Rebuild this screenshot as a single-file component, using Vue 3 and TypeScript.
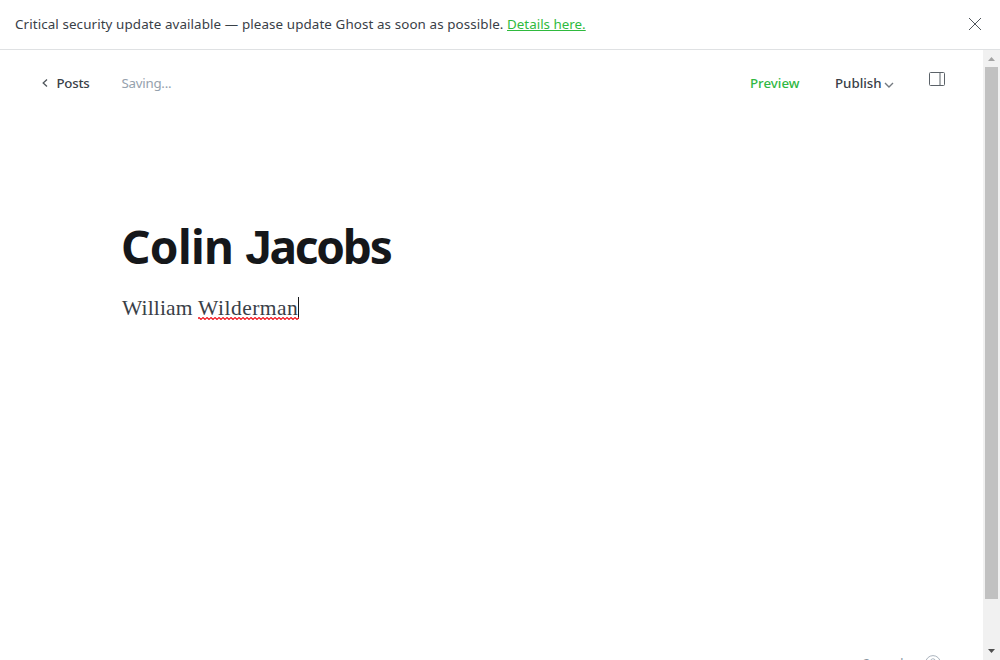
<script setup lang="ts">
const titleWords = ['Colin', 'Jacobs']
const saveStatus = 'Saving...'
const wordCount = 2
</script>

<template>
  <div class="app">
    <header class="alert">
      <p class="alert-text"><span class="alert-message">Critical security update available — please update Ghost as soon as possible.</span><a class="alert-link">Details here.</a></p>
      <svg class="close" width="14" height="14" viewBox="0 0 14 14"><path d="M1 1l12 12M13 1L1 13" /></svg>
    </header>
    <div class="body">
      <main class="editor">
        <nav class="toolbar">
          <a class="back">
            <svg width="6" height="8" viewBox="0 0 6 8"><path d="M5 .5L1.2 4L5 7.5" /></svg>
            <span>Posts</span>
          </a>
          <span class="status">{{ saveStatus }}</span>
          <a class="preview">Preview</a>
          <a class="publish">
            <span>Publish</span>
            <svg width="10" height="6" viewBox="0 0 10 6"><path d="M1 1l4 4l4-4" /></svg>
          </a>
          <svg class="panel" width="16" height="14" viewBox="0 0 16 14">
            <rect x=".5" y=".5" width="15" height="13" rx="1" />
            <path d="M11 1v12" />
          </svg>
        </nav>
        <h1 class="title"><span v-for="word in titleWords" :key="word" class="title-word">{{ word }}</span></h1>
        <p class="content"><span class="first">William</span><span class="misspelled">Wilderman<svg class="squiggle" width="101" height="3" viewBox="0 0 101 3"><defs><pattern id="wave" width="4" height="3" patternUnits="userSpaceOnUse"><path d="M-1 2.5L1 .5L3 2.5L5 .5" /></pattern></defs><rect width="101" height="3" fill="url(#wave)" /></svg></span><span class="caret"></span></p>
        <footer class="footer">
          <span class="words">{{ wordCount }} words</span>
          <svg width="16" height="16" viewBox="0 0 16 16"><circle cx="8" cy="8" r="7.4" /><path d="M5.6 6.2a2.4 2.4 0 1 1 3.5 2.1Q8 8.8 8 10M8 11.5v1" /></svg>
        </footer>
      </main>
      <div class="scrollbar">
        <svg class="arrow up" width="7" height="4" viewBox="0 0 7 4"><path d="M0 4L3.5 0L7 4z" /></svg>
        <div class="thumb"></div>
        <svg class="arrow down" width="7" height="4" viewBox="0 0 7 4"><path d="M0 0L3.5 4L7 0z" /></svg>
      </div>
    </div>
  </div>
</template>

<style>
body { margin: 0; overflow: hidden; background: #fff; }
</style>

<style scoped>
.app { height: 660px; display: flex; flex-direction: column; overflow: hidden; font-family: "Noto Sans", "Open Sans", sans-serif; color: #394047; background: #fff; }
.app p, .app h1 { margin: 0; }
svg { fill: none; flex: none; display: block; }
.alert { box-sizing: border-box; height: 50px; flex: none; border-bottom: 1px solid #dfe1e3; display: flex; align-items: center; justify-content: space-between; padding: 0 18px 2px 15px; }
.alert-text { display: flex; font-size: 13.4px; line-height: 20px; white-space: nowrap; }
.alert-message { width: 492px; letter-spacing: .095px; }
.alert-link { color: #2fba3e; text-decoration: underline; text-underline-offset: 1px; text-decoration-thickness: 1px; text-decoration-skip-ink: none; }
.close path { stroke: #50565c; stroke-width: 1; }
.body { flex: 1; min-height: 0; display: flex; }
.editor { flex: 1; min-width: 0; display: flex; flex-direction: column; overflow: hidden; }
.toolbar { display: flex; align-items: center; height: 20px; flex: none; padding: 23px 38px 0 42px; font-size: 13.3px; line-height: 20px; white-space: nowrap; }
.back { display: flex; align-items: center; gap: 8.5px; width: 79.5px; font-weight: 500; letter-spacing: -.25px; }
.back svg path { stroke: #50565c; stroke-width: 1.3; }
.publish svg path { stroke: #747a80; stroke-width: 1.4; }
.status { color: #95a1ad; letter-spacing: -.25px; }
.preview { margin-left: auto; width: 85px; color: #30b843; font-weight: 500; }
.publish { display: flex; align-items: center; gap: 2.5px; width: 94px; font-weight: 500; }
.publish svg { margin-top: 4px; }
.panel { margin-top: -8px; stroke: #5b6268; }
.title { box-sizing: border-box; height: 187px; flex: none; display: flex; gap: 12px; padding: 120px 0 0 121px; font-size: 46px; line-height: 66px; font-weight: 700; color: #15171a; white-space: nowrap; letter-spacing: -.7px; }
.title-word { display: block; }
.title-word:last-child { letter-spacing: -2.2px; }
.title-word:last-child::first-letter { font-family: "Liberation Sans", sans-serif; font-size: 47.5px; line-height: 40px; }
.content { display: flex; align-items: center; padding: 12px 0 0 122px; font-family: "Liberation Serif", serif; font-size: 21.5px; line-height: 32px; white-space: nowrap; }
.first { width: 76px; letter-spacing: .15px; }
.misspelled { position: relative; width: 100px; letter-spacing: .5px; }
.squiggle { position: absolute; left: 0; bottom: 4px; }
.squiggle path { stroke: #f01820; stroke-width: 1.2; }
.caret { width: 1px; height: 22px; background: #15171a; }
.footer { height: 5px; margin-top: auto; flex: none; display: flex; justify-content: flex-end; align-items: flex-start; padding-right: 42px; font-size: 12.5px; line-height: 18px; color: #8995a1; }
.words { width: 62px; }
.footer svg { stroke: #abb4be; }
.scrollbar { width: 17px; flex: none; background: #f1f1f1; display: flex; flex-direction: column; align-items: center; }
.thumb { width: 13px; height: 532px; background: #c1c1c1; }
.up { margin: 7px 0 6px; fill: #a3a3a3; }
.down { margin-top: 50px; fill: #505050; }
</style>
